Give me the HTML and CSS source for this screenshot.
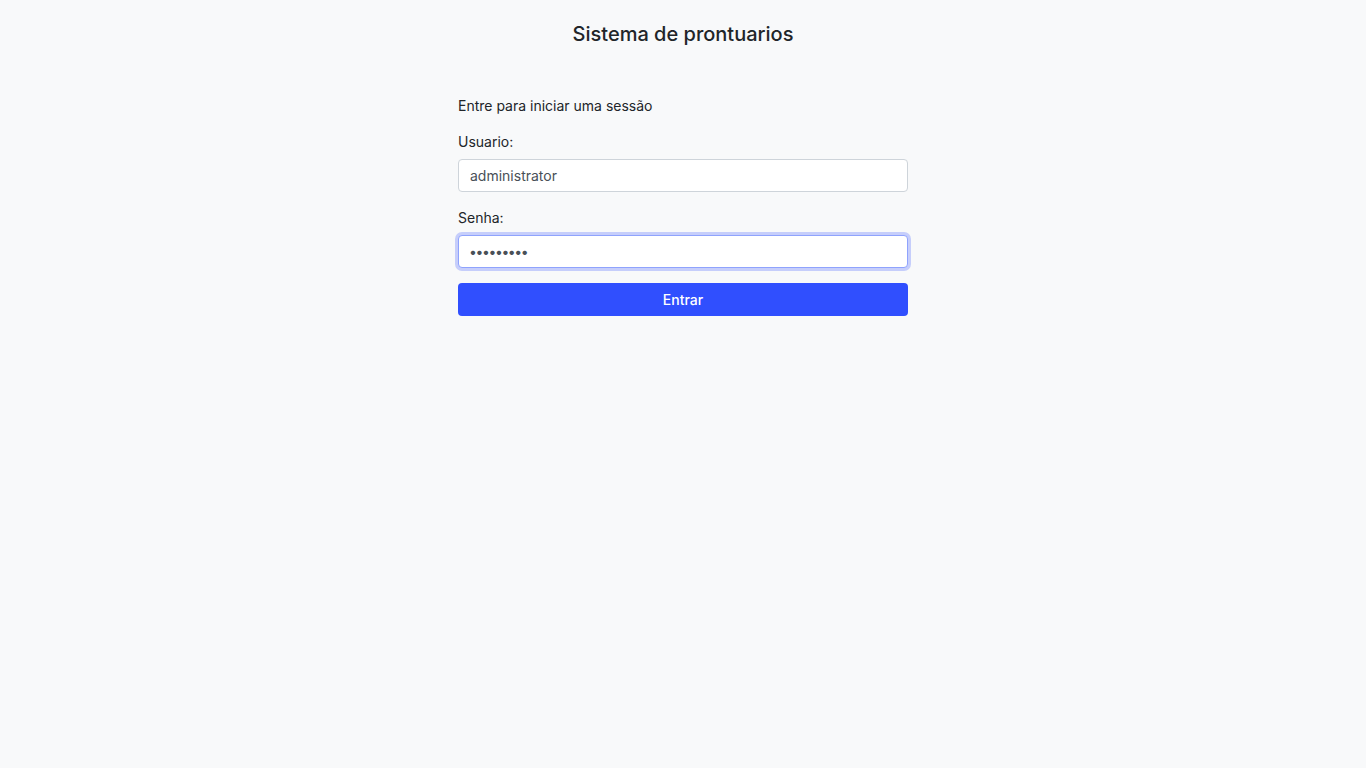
FILE: index.html
```html
<!DOCTYPE html>
<html lang="pt">
<head>
<meta charset="utf-8">
<title>Sistema de prontuarios</title>
<link rel="stylesheet" href="styles.css">
</head>
<body>
<header class="top">
  <h1 class="title">Sistema de prontuarios</h1>
</header>
<main class="login">
  <form class="login-form">
    <p class="intro">Entre para iniciar uma sessão</p>
    <div class="field">
      <label class="label" for="user">Usuario:</label>
      <input class="control" id="user" type="text" value="administrator">
    </div>
    <div class="field">
      <label class="label" for="pass">Senha:</label>
      <input class="control focused" id="pass" type="password" value="123456789">
    </div>
    <button class="btn" type="button">Entrar</button>
  </form>
</main>
</body>
</html>
```
FILE: styles.css
```css
* { box-sizing: border-box; }
html, body { margin: 0; padding: 0; }
body {
  background: #f8f9fa;
  color: #212529;
  font-family: Inter, "Noto Sans", "Liberation Sans", sans-serif;
  font-size: 14px;
  line-height: 21px;
  min-height: 768px;
}
.top {
  padding-top: 22px;
  text-align: center;
}
.title {
  margin: 0;
  font-size: 20px;
  line-height: 24px;
  font-weight: 500;
  color: #212529;
}
.login {
  display: flex;
  justify-content: center;
  padding-top: 49px;
}
.login-form {
  width: 450px;
  display: flex;
  flex-direction: column;
}
.intro {
  margin: 0 0 15px 0;
}
.field {
  display: flex;
  flex-direction: column;
  margin-bottom: 15px;
}
.label {
  margin-bottom: 7px;
}
.control {
  height: 33px;
  width: 100%;
  padding: 0 11px;
  font-family: inherit;
  font-size: 14px;
  color: #495057;
  background: #fff;
  border: 1px solid #ced4da;
  border-radius: 4px;
  outline: none;
}
.control.focused {
  border-color: #8fa3fd;
  box-shadow: 0 0 0 3px rgba(48, 79, 254, 0.25);
  letter-spacing: -1.4px;
  padding-left: 10px;
}
.btn {
  height: 33px;
  width: 100%;
  background: #304ffe;
  color: #fff;
  border: 0;
  border-radius: 4px;
  font-family: inherit;
  font-size: 14px;
  font-weight: 500;
  cursor: pointer;
}
```
